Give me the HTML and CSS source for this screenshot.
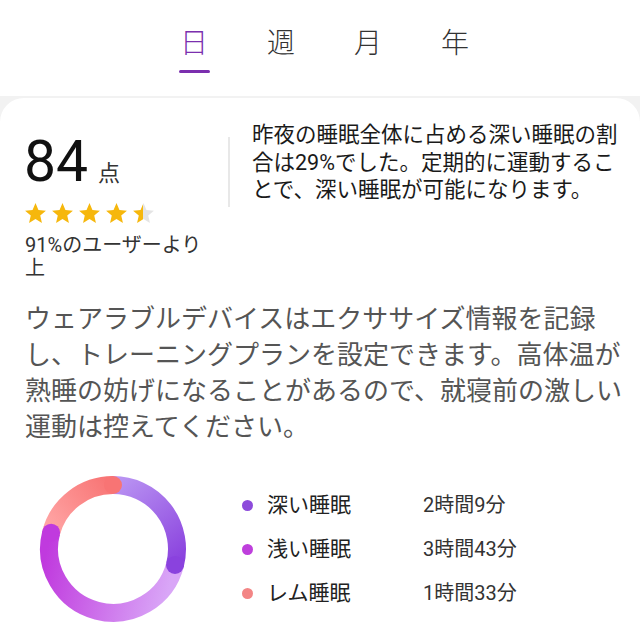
FILE: index.html
```html
<!DOCTYPE html>
<html lang="ja">
<head>
<meta charset="utf-8">
<link rel="stylesheet" href="styles.css">
</head>
<body>
<header class="tabs">
  <div class="tab active"><span class="tab-text">日</span><span class="bar"></span></div>
  <div class="tab"><span class="tab-text">週</span></div>
  <div class="tab"><span class="tab-text">月</span></div>
  <div class="tab"><span class="tab-text">年</span></div>
</header>
<main class="page">
  <section class="card">
    <div class="summary">
      <div class="score">
        <div class="score-line"><span class="num">84</span><span class="unit">点</span></div>
        <div class="stars">
          <svg class="star" viewBox="0 0 24 24"><path class="star-full" d="M12 17.27L18.18 21l-1.64-7.03L22 9.24l-7.19-.61L12 2 9.19 8.63 2 9.24l5.460 4.73L5.82 21z"/></svg>
          <svg class="star" viewBox="0 0 24 24"><path class="star-full" d="M12 17.27L18.18 21l-1.64-7.03L22 9.24l-7.19-.61L12 2 9.19 8.63 2 9.24l5.46 4.73L5.82 21z"/></svg>
          <svg class="star" viewBox="0 0 24 24"><path class="star-full" d="M12 17.27L18.18 21l-1.64-7.03L22 9.24l-7.19-.61L12 2 9.19 8.63 2 9.24l5.46 4.73L5.82 21z"/></svg>
          <svg class="star" viewBox="0 0 24 24"><path class="star-full" d="M12 17.27L18.18 21l-1.64-7.03L22 9.24l-7.19-.61L12 2 9.19 8.63 2 9.24l5.46 4.73L5.82 21z"/></svg>
          <svg class="star" viewBox="0 0 24 24">
            <defs><linearGradient id="half" x1="0" y1="0" x2="1" y2="0"><stop offset="0.5" stop-color="#f6b70c"/><stop offset="0.5" stop-color="#e4e4e4"/></linearGradient></defs>
            <path fill="url(#half)" d="M12 17.27L18.18 21l-1.64-7.03L22 9.24l-7.19-.61L12 2 9.19 8.63 2 9.24l5.46 4.73L5.82 21z"/>
          </svg>
        </div>
        <p class="rank">91%のユーザーより上</p>
      </div>
      <div class="divider"></div>
      <p class="insight">昨夜の睡眠全体に占める深い睡眠の割合は29%でした。定期的に運動することで、深い睡眠が可能になります。</p>
    </div>
    <p class="advice">ウェアラブルデバイスはエクササイズ情報を記録し、トレーニングプランを設定できます。高体温が熟睡の妨げになることがあるので、就寝前の激しい運動は控えてください。</p>
    <div class="chart">
      <svg class="ring" viewBox="0 0 150 150" width="150" height="150">
        <defs>
          <linearGradient id="gDeep" gradientUnits="userSpaceOnUse" x1="75" y1="11" x2="137" y2="91">
            <stop offset="0" stop-color="#b993f2"/><stop offset="1" stop-color="#8a42de"/>
          </linearGradient>
          <linearGradient id="gLight" gradientUnits="userSpaceOnUse" x1="137" y1="91" x2="13" y2="59">
            <stop offset="0" stop-color="#d9a6f7"/><stop offset="1" stop-color="#c03ade"/>
          </linearGradient>
          <linearGradient id="gRem" gradientUnits="userSpaceOnUse" x1="13" y1="59" x2="75" y2="11">
            <stop offset="0" stop-color="#ffa5a5"/><stop offset="1" stop-color="#f87474"/>
          </linearGradient>
        </defs>
        <path d="M75 11 A64 64 0 0 1 136.99 90.92" fill="none" stroke="url(#gDeep)" stroke-width="18"/>
        <path d="M136.99 90.92 A64 64 0 1 1 13.12 58.65" fill="none" stroke="url(#gLight)" stroke-width="18"/>
        <path d="M13.12 58.65 A64 64 0 0 1 75 11" fill="none" stroke="url(#gRem)" stroke-width="18"/>
        <circle cx="136.99" cy="90.92" r="9" fill="#8a42de"/>
        <circle cx="13.12" cy="58.65" r="9" fill="#c03ade"/>
        <circle cx="75" cy="11" r="9" fill="#f87474"/>
      </svg>
      <div class="legend">
        <span class="dot dot-deep"></span><span class="label">深い睡眠</span><span class="dur">2時間9分</span>
        <span class="dot dot-light"></span><span class="label">浅い睡眠</span><span class="dur">3時間43分</span>
        <span class="dot dot-rem"></span><span class="label">レム睡眠</span><span class="dur">1時間33分</span>
      </div>
    </div>
  </section>
</main>
</body>
</html>
```

FILE: styles.css
```css
html, body {
  margin: 0;
  padding: 0;
}
body {
  background: #f2f2f2;
  font-family: Roboto, "Noto Sans CJK JP", sans-serif;
  width: 640px;
  height: 640px;
  overflow: hidden;
}
.tabs {
  background: #ffffff;
  height: 96px;
  box-sizing: border-box;
  padding-top: 27px;
  padding-left: 9px;
  display: flex;
  justify-content: center;
}
.tab {
  width: 87px;
  display: flex;
  flex-direction: column;
  align-items: center;
  font-family: "Noto Sans CJK JP", sans-serif;
  font-size: 28px;
  line-height: 28px;
  font-weight: 300;
  color: #333333;
}
.tab.active {
  color: #7b2fae;
}
.bar {
  width: 31px;
  height: 3px;
  border-radius: 2px;
  background: #7b2fae;
  margin-top: 15px;
}
.page {
  padding-top: 2px;
}
.card {
  background: #ffffff;
  border-radius: 24px 24px 0 0;
  padding: 23px 0 0 25px;
  height: 560px;
  box-sizing: border-box;
}
.summary {
  display: flex;
  align-items: flex-start;
}
.score {
  width: 190px;
  padding-top: 13px;
}
.score-line {
  display: flex;
  align-items: baseline;
}
.num {
  font-size: 57px;
  line-height: 56px;
  color: #111111;
  margin-left: -1px;
}
.unit {
  font-size: 22px;
  color: #333333;
  margin-left: 10px;
}
.stars {
  display: flex;
  gap: 2px;
  margin-top: 11px;
  margin-left: -2px;
}
.star {
  width: 25px;
  height: 25px;
  display: block;
}
.star-full {
  fill: #f6b70c;
}
.rank {
  margin: 8px 0 0;
  font-size: 20px;
  line-height: 23px;
  color: #333333;
}
.divider {
  width: 2px;
  height: 70px;
  background: #e8e8e8;
  margin-top: 16px;
  margin-left: 13px;
}
.insight {
  margin: 0 0 0 22px;
  width: 383px;
  font-size: 21.5px;
  line-height: 27.5px;
  color: #1a1a1a;
}
.advice {
  margin: 21px 0 0;
  width: 605px;
  font-size: 26px;
  line-height: 36px;
  color: #555555;
}
.chart {
  display: flex;
  align-items: center;
  margin-top: 29px;
}
.ring {
  display: block;
  margin-left: 13px;
}
.legend {
  margin-left: 54px;
  display: grid;
  grid-template-columns: 11px 142px auto;
  column-gap: 14px;
  row-gap: 20px;
  align-items: center;
}
.dot {
  width: 11px;
  height: 11px;
  border-radius: 50%;
}
.dot-deep { background: #8d4bdb; }
.dot-light { background: #be3fdc; }
.dot-rem { background: #f38585; }
.label {
  font-size: 21px;
  line-height: 24px;
  color: #222222;
}
.dur {
  font-size: 20px;
  line-height: 24px;
  color: #333333;
}
```
